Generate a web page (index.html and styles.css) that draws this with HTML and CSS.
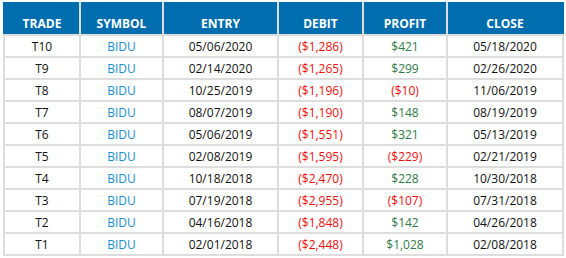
FILE: index.html
```html
<!DOCTYPE html>
<html>
<head>
<meta charset="utf-8">
<link rel="stylesheet" href="styles.css">
</head>
<body>
<table class="trades">
  <colgroup>
    <col class="c1"><col class="c2"><col class="c3"><col class="c4"><col class="c5"><col class="c6">
  </colgroup>
  <thead>
    <tr><th>TRADE</th><th>SYMBOL</th><th>ENTRY</th><th>DEBIT</th><th>PROFIT</th><th>CLOSE</th></tr>
  </thead>
  <tbody>
    <tr><td>T10</td><td class="sym">BIDU</td><td>05/06/2020</td><td class="neg">($1,286)</td><td class="pos">$421</td><td>05/18/2020</td></tr>
    <tr><td>T9</td><td class="sym">BIDU</td><td>02/14/2020</td><td class="neg">($1,265)</td><td class="pos">$299</td><td>02/26/2020</td></tr>
    <tr><td>T8</td><td class="sym">BIDU</td><td>10/25/2019</td><td class="neg">($1,196)</td><td class="neg">($10)</td><td>11/06/2019</td></tr>
    <tr><td>T7</td><td class="sym">BIDU</td><td>08/07/2019</td><td class="neg">($1,190)</td><td class="pos">$148</td><td>08/19/2019</td></tr>
    <tr><td>T6</td><td class="sym">BIDU</td><td>05/06/2019</td><td class="neg">($1,551)</td><td class="pos">$321</td><td>05/13/2019</td></tr>
    <tr><td>T5</td><td class="sym">BIDU</td><td>02/08/2019</td><td class="neg">($1,595)</td><td class="neg">($229)</td><td>02/21/2019</td></tr>
    <tr><td>T4</td><td class="sym">BIDU</td><td>10/18/2018</td><td class="neg">($2,470)</td><td class="pos">$228</td><td>10/30/2018</td></tr>
    <tr><td>T3</td><td class="sym">BIDU</td><td>07/19/2018</td><td class="neg">($2,955)</td><td class="neg">($107)</td><td>07/31/2018</td></tr>
    <tr><td>T2</td><td class="sym">BIDU</td><td>04/16/2018</td><td class="neg">($1,848)</td><td class="pos">$142</td><td>04/26/2018</td></tr>
    <tr><td>T1</td><td class="sym">BIDU</td><td>02/01/2018</td><td class="neg">($2,448)</td><td class="pos">$1,028</td><td>02/08/2018</td></tr>
  </tbody>
</table>
</body>
</html>
```
FILE: styles.css
```css
html, body {
  margin: 0;
  padding: 0;
  background: #ffffff;
}
body {
  padding: 2px 4px 0 3px;
  font-family: "Open Sans", "Noto Sans", sans-serif;
}
.trades {
  border-collapse: collapse;
  width: 559px;
  table-layout: fixed;
}
.c1 { width: 76px; }
.c2 { width: 83px; }
.c3 { width: 115px; }
.c4 { width: 85px; }
.c5 { width: 84px; }
.c6 { width: 116px; }
.trades th {
  background: #006eae;
  color: #ffffff;
  font-weight: 700;
  font-size: 12px;
  height: 32px;
  padding: 8px 0 0 0;
  box-sizing: border-box;
  text-align: center;
  border-left: 2px solid #d8dde2;
  border-right: 2px solid #d8dde2;
  border-top: 2px solid #006eae;
  border-bottom: 2px solid #dddddd;
}
.trades th:first-child { border-left-color: #006eae; }
.trades th:last-child { border-right-color: #006eae; }
.trades td {
  font-size: 12px;
  color: #111111;
  text-align: center;
  height: 20px;
  padding: 0;
  border: 2px solid #dddddd;
}
.trades td.sym { color: #1a8fd0; }
.trades td.neg { color: #f20d0d; }
.trades td.pos { color: #2f7a47; }
```
